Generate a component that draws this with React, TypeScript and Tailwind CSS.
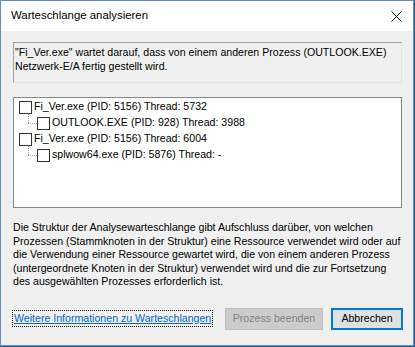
import React from "react";

const rows = [
  { level: 0, text: "Fi_Ver.exe (PID: 5156) Thread: 5732" },
  { level: 1, text: "OUTLOOK.EXE (PID: 928) Thread: 3988" },
  { level: 0, text: "Fi_Ver.exe (PID: 5156) Thread: 6004" },
  { level: 1, text: "splwow64.exe (PID: 5876) Thread: -" },
];

const descLines = [
  "Die Struktur der Analysewarteschlange gibt Aufschluss darüber, von welchen",
  "Prozessen (Stammknoten in der Struktur) eine Ressource verwendet wird oder auf",
  "die Verwendung einer Ressource gewartet wird, die von einem anderen Prozess",
  "(untergeordnete Knoten in der Struktur) verwendet wird und die zur Fortsetzung",
  "des ausgewählten Prozesses erforderlich ist.",
];

const TreeRow: React.FC<{ level: number; text: string }> = ({ level, text }) => (
  <div className="relative flex items-center h-[16px]">
    {level === 1 && (
      <>
        <div className="absolute left-[9px] top-[-1px] h-[9px] border-l border-dotted border-[#a0a0a0]" />
        <div className="absolute left-[9px] top-[8px] w-[9px] border-t border-dotted border-[#a0a0a0]" />
      </>
    )}
    <div className={level === 1 ? "w-[18px] shrink-0" : "w-0 shrink-0"} />
    <div className="w-[13px] h-[13px] border border-[#333333] bg-white shrink-0" />
    <span className="ml-[2px] whitespace-nowrap">{text}</span>
  </div>
);

const App: React.FC = () => {
  return (
    <div
      className="w-[415px] h-[347px] bg-[#2a5a8a] text-[10.6px] text-black"
      style={{ fontFamily: '"Liberation Sans", Arial, sans-serif' }}
    >
      <div className="w-[414px] h-[346px] flex flex-col border border-[#5f8fbf] bg-[#f0f0f0]">
        {/* title bar */}
        <div className="h-[30px] shrink-0 bg-white flex items-center justify-between pl-[10px] pr-[11px]">
          <span className="text-[11.4px]">Warteschlange analysieren</span>
          <svg width="11" height="11" viewBox="0 0 11 11" className="mt-[1px]">
            <path d="M0.5 0.5 L10.5 10.5 M10.5 0.5 L0.5 10.5" stroke="#000" strokeWidth="1" />
          </svg>
        </div>

        <div className="flex flex-col px-[12px] pt-[11px]">
          {/* info box */}
          <div className="h-[41px] w-[389px] border border-[#a0a0a0] border-r-[#e3e3e3] border-b-[#e3e3e3] bg-[#f0f0f0] px-[1px] pt-[2px] leading-[14px] whitespace-nowrap">
            "Fi_Ver.exe" wartet darauf, dass von einem anderen Prozess (OUTLOOK.EXE)
            <br />
            Netzwerk-E/A fertig gestellt wird.
          </div>

          {/* tree */}
          <div className="mt-[14px] h-[111px] w-[389px] border border-[#828790] bg-white pl-[5px] pt-[1px]">
            {rows.map((r, i) => (
              <TreeRow key={i} level={r.level} text={r.text} />
            ))}
          </div>

          {/* description */}
          <div className="mt-[13px] leading-[13.5px] whitespace-nowrap">
            {descLines.map((l, i) => (
              <div key={i}>{l}</div>
            ))}
          </div>

          {/* footer */}
          <div className="mt-[19px] flex items-center">
            <a className="text-[#0066cc] underline outline-1 outline-dotted outline-black px-[1px]">
              Weitere Informationen zu Warteschlangen
            </a>
            <div className="flex-1" />
            <button className="w-[98px] h-[22px] bg-[#cccccc] border border-[#bfbfbf] text-[#838383]">
              Prozess beenden
            </button>
            <button className="ml-[8px] w-[72px] h-[22px] bg-[#e1e1e1] border-2 border-[#0078d7] mr-[-2px]">
              Abbrechen
            </button>
          </div>
        </div>
      </div>
    </div>
  );
};

export default App;
